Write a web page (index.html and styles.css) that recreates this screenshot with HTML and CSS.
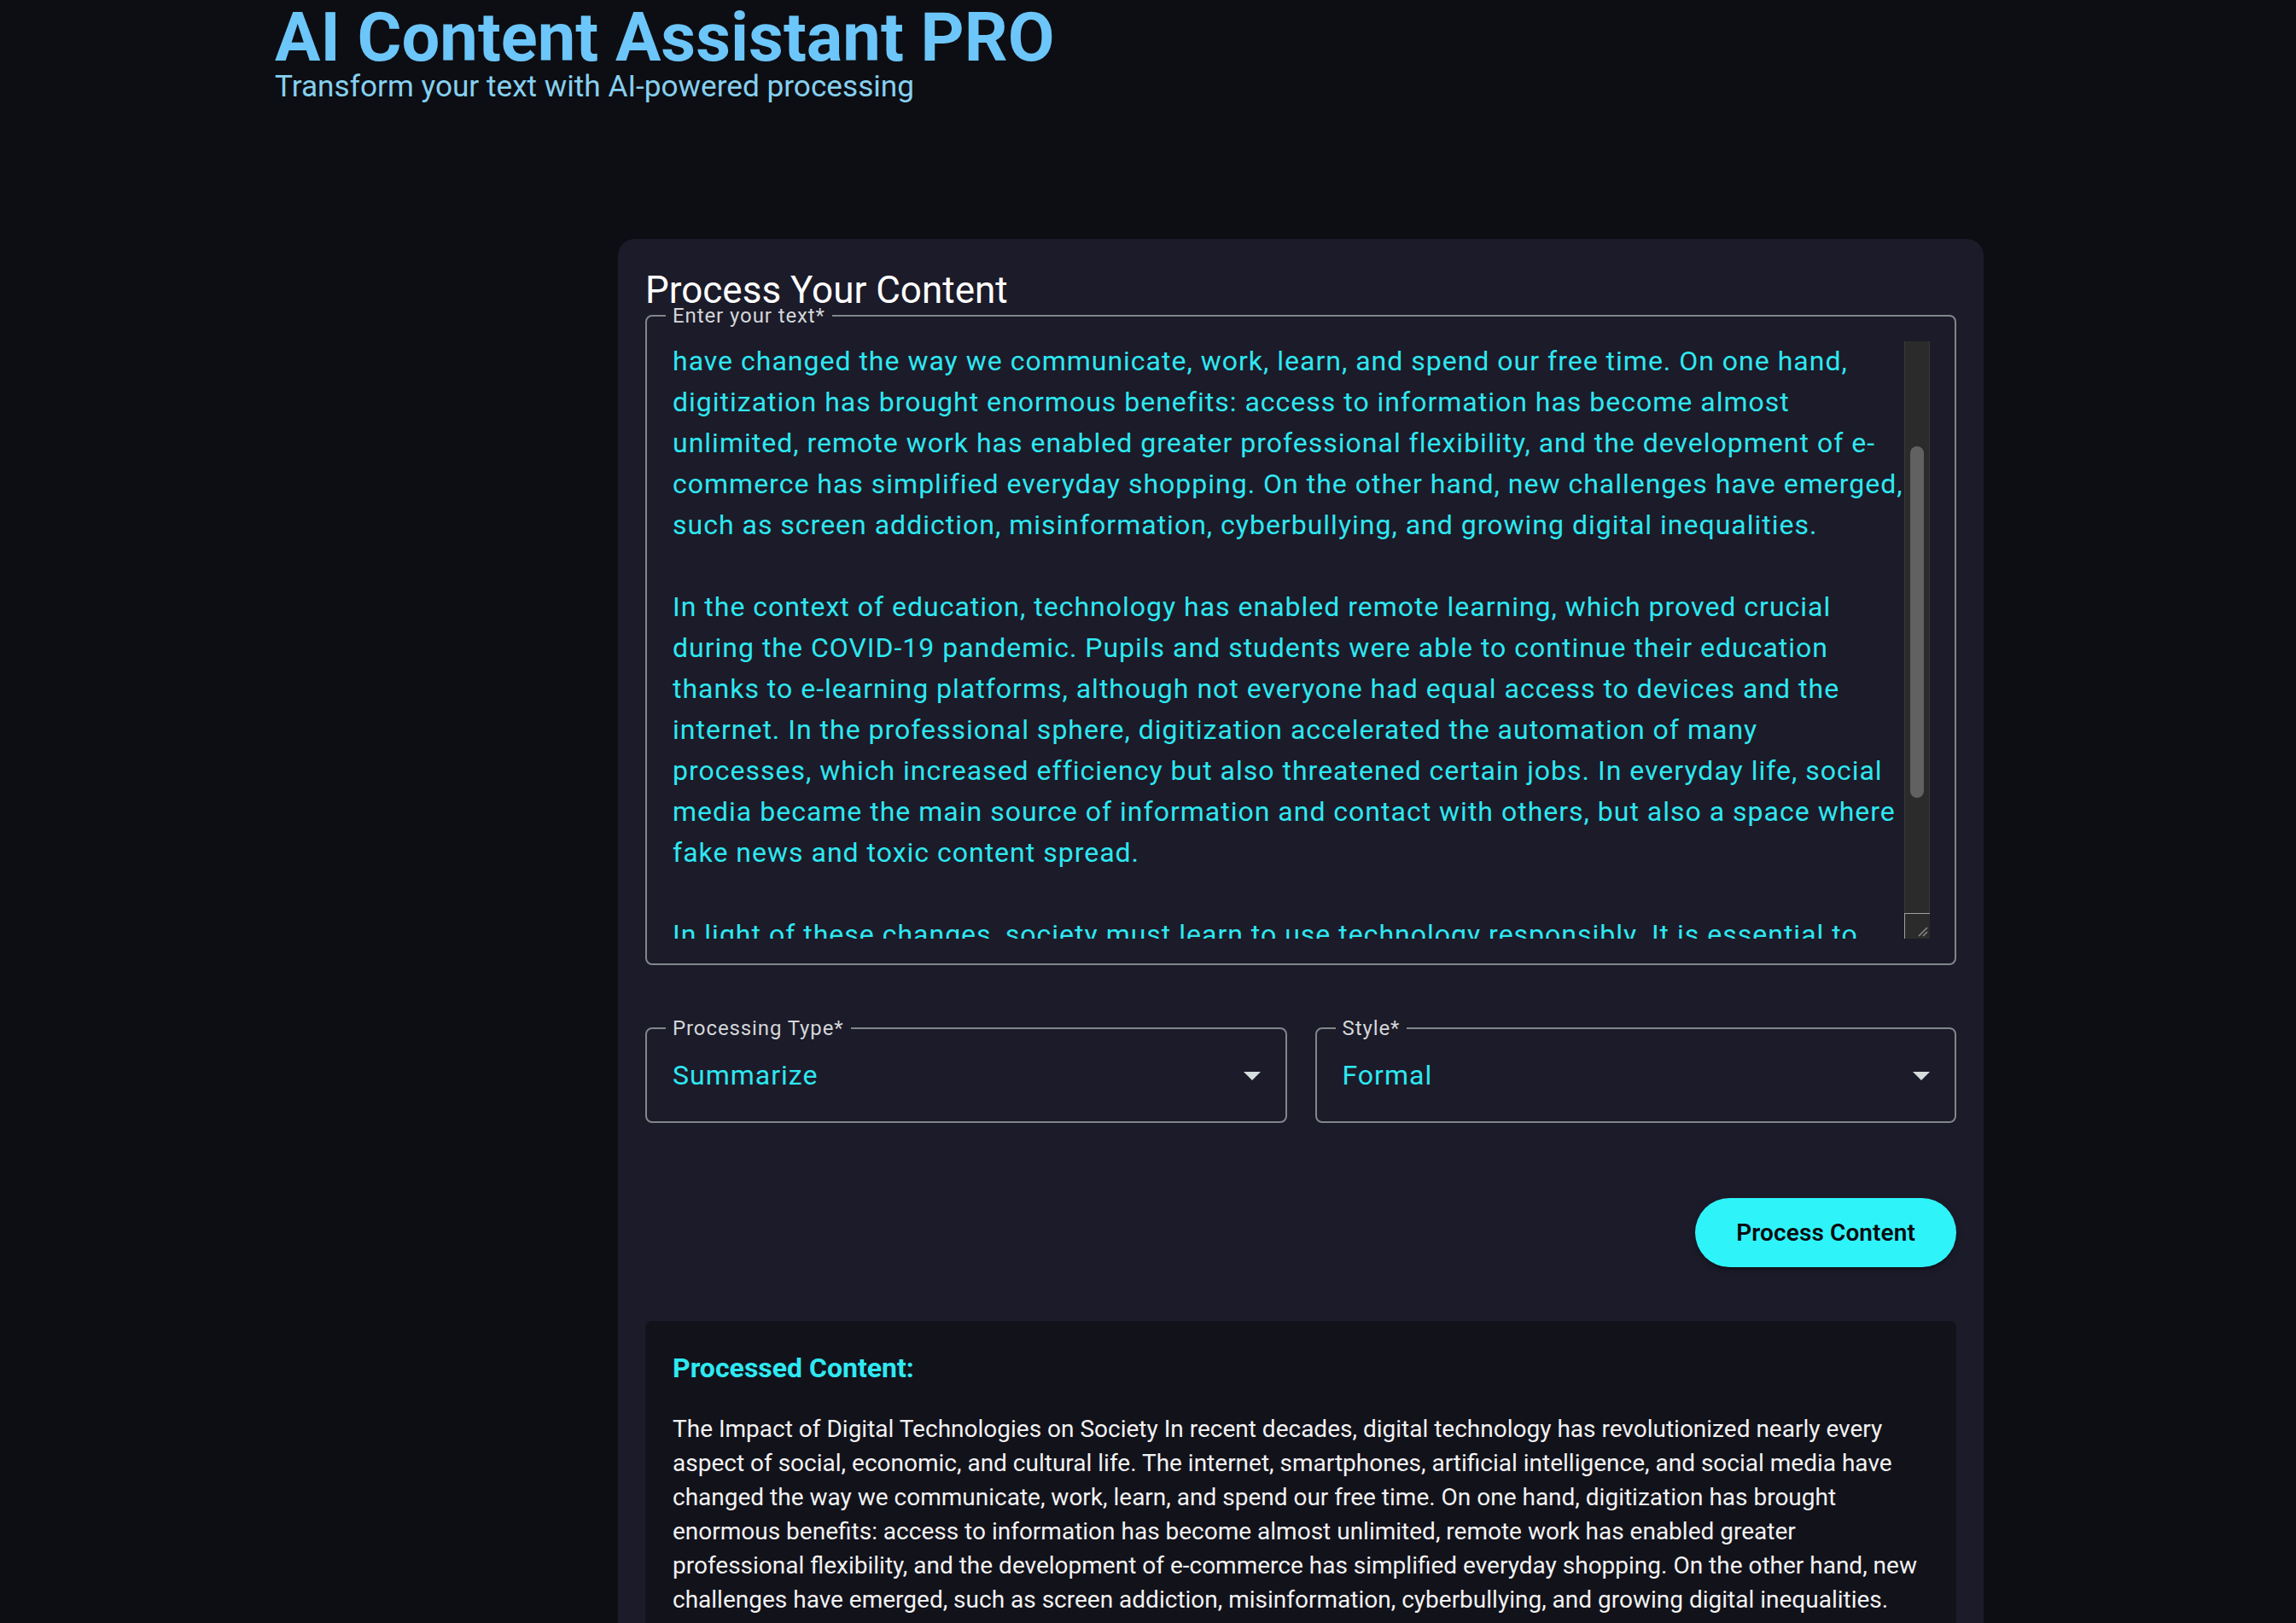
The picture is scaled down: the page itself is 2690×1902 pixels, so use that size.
FILE: index.html
```html
<!DOCTYPE html>
<html lang="en">
<head>
<meta charset="utf-8">
<title>AI Content Assistant PRO</title>
<link rel="stylesheet" href="styles.css">
</head>
<body>
<header class="hero">
  <h1 class="hero-title">AI Content Assistant PRO</h1>
  <p class="hero-sub">Transform your text with AI-powered processing</p>
</header>

<main class="card">
  <h2 class="card-title">Process Your Content</h2>

  <div class="field field-multiline">
    <span class="field-label">Enter your text*</span>
    <div class="textarea">
      <div class="textarea-view"><div class="textarea-lines">have changed the way we communicate, work, learn, and spend our free time. On one hand,
digitization has brought enormous benefits: access to information has become almost
unlimited, remote work has enabled greater professional flexibility, and the development of e-
commerce has simplified everyday shopping. On the other hand, new challenges have emerged,
such as screen addiction, misinformation, cyberbullying, and growing digital inequalities.

In the context of education, technology has enabled remote learning, which proved crucial
during the COVID-19 pandemic. Pupils and students were able to continue their education
thanks to e-learning platforms, although not everyone had equal access to devices and the
internet. In the professional sphere, digitization accelerated the automation of many
processes, which increased efficiency but also threatened certain jobs. In everyday life, social
media became the main source of information and contact with others, but also a space where
fake news and toxic content spread.

In light of these changes, society must learn to use technology responsibly. It is essential to</div></div>
      <div class="scrollbar">
        <div class="scroll-track"><div class="scroll-thumb"></div></div>
        <div class="resizer">
          <svg viewBox="0 0 30 30" width="30" height="30"><path d="M27 17 L17 27 M27 22 L22 27" stroke="#8c8c8c" stroke-width="1.5" fill="none"/></svg>
        </div>
      </div>
    </div>
  </div>

  <div class="select-row">
    <div class="field field-select">
      <span class="field-label">Processing Type*</span>
      <span class="select-value">Summarize</span>
      <svg class="select-arrow" viewBox="0 0 24 24"><path d="M7 10l5 5 5-5z"/></svg>
    </div>
    <div class="field field-select">
      <span class="field-label">Style*</span>
      <span class="select-value">Formal</span>
      <svg class="select-arrow" viewBox="0 0 24 24"><path d="M7 10l5 5 5-5z"/></svg>
    </div>
  </div>

  <div class="actions">
    <button class="btn-primary" type="button">Process Content</button>
  </div>

  <section class="result">
    <h3 class="result-title">Processed Content:</h3>
    <p class="result-text">The Impact of Digital Technologies on Society In recent decades, digital technology has revolutionized nearly every aspect of social, economic, and cultural life. The internet, smartphones, artificial intelligence, and social media have changed the way we communicate, work, learn, and spend our free time. On one hand, digitization has brought enormous benefits: access to information has become almost unlimited, remote work has enabled greater professional flexibility, and the development of e-commerce has simplified everyday shopping. On the other hand, new challenges have emerged, such as screen addiction, misinformation, cyberbullying, and growing digital inequalities.</p>
    <p class="result-text">In the context of education, technology has enabled remote learning, which proved crucial during the COVID-19 pandemic.</p>
  </section>
</main>
</body>
</html>
```

FILE: styles.css
```css
html, body {
  margin: 0;
  padding: 0;
}

body {
  background: #0d0e13;
  font-family: Roboto, "Liberation Sans", Arial, sans-serif;
  color: #ffffff;
}

.hero {
  padding: 8px 0 0 322px;
}

.hero-title {
  margin: 0;
  font-size: 79.5px;
  font-weight: 700;
  line-height: 72px;
  color: #6cc6f9;
}

.hero-sub {
  margin: 0;
  padding-top: 3px;
  font-size: 35.2px;
  line-height: 36px;
  color: #86d0f0;
}

.card {
  box-sizing: border-box;
  width: 1600px;
  margin: 161px 0 0 724px;
  padding: 32px 32px 32px;
  background: #1c1b29;
  border-radius: 20px;
}

.card-title {
  margin: 0 0 1px;
  font-size: 44px;
  font-weight: 400;
  line-height: 56px;
  color: #ffffff;
}

.field {
  position: relative;
  box-sizing: border-box;
  border: 2px solid #80878a;
  border-radius: 8px;
}

.field-label {
  position: absolute;
  top: -13px;
  left: 22px;
  padding: 0 8px;
  background: #1c1b29;
  font-size: 24px;
  line-height: 24px;
  letter-spacing: 0.9px;
  color: #d3d7d9;
  white-space: nowrap;
}

.field-multiline {
  padding: 29px 29px 29px 30px;
}

.textarea {
  display: flex;
  height: 700px;
}

.textarea-view {
  flex: 1;
  min-width: 0;
  overflow: hidden;
}

.textarea-lines {
  margin-top: -1px;
  white-space: pre;
  font-size: 32px;
  line-height: 48px;
  letter-spacing: 1px;
  color: #2ee8f1;
}

.scrollbar {
  width: 30px;
  display: flex;
  flex-direction: column;
}

.scroll-track {
  flex: 1;
  box-sizing: border-box;
  padding-top: 123px;
  background: #2b2b2b;
  border-left: 1px solid #3a3a3a;
  border-right: 1px solid #3a3a3a;
}

.scroll-thumb {
  width: 16px;
  height: 412px;
  margin: 0 auto;
  background: #616161;
  border-radius: 8px;
}

.resizer {
  box-sizing: border-box;
  height: 30px;
  background: #2b2b2b;
  border-top: 1px solid #a0a0a0;
  border-left: 1px solid #a0a0a0;
}

.resizer svg {
  display: block;
  margin: -1px 0 0 -1px;
}

.select-row {
  display: grid;
  grid-template-columns: 1fr 1fr;
  column-gap: 33px;
  margin-top: 73px;
}

.field-select {
  display: flex;
  align-items: center;
  height: 112px;
  padding: 0 15px 0 30px;
}

.select-value {
  font-size: 32px;
  line-height: 40px;
  letter-spacing: 1px;
  color: #2ee8f1;
}

.select-arrow {
  width: 48px;
  height: 48px;
  margin-left: auto;
  fill: #d5dddd;
}

.actions {
  display: flex;
  justify-content: flex-end;
  margin-top: 88px;
}

.btn-primary {
  height: 81px;
  padding: 0 48px;
  border: none;
  border-radius: 999px;
  background: #2ef4fa;
  color: #0a0b10;
  font-family: Roboto, "Liberation Sans", Arial, sans-serif;
  font-size: 28px;
  font-weight: 600;
  letter-spacing: 0.1px;
  box-shadow: 0 6px 2px -4px rgba(0,0,0,0.2), 0 4px 4px 0 rgba(0,0,0,0.14), 0 2px 10px 0 rgba(0,0,0,0.12);
}

.result {
  margin-top: 63px;
  padding: 31px 32px 32px;
  background: #12121b;
  border-radius: 8px;
}

.result-title {
  margin: 0 0 28px;
  font-size: 32px;
  font-weight: 700;
  line-height: 48px;
  color: #2ee9f2;
}

.result-text {
  margin: 0 0 24px;
  font-size: 28px;
  line-height: 40px;
  letter-spacing: 0;
  color: #f2f2f2;
}
```
